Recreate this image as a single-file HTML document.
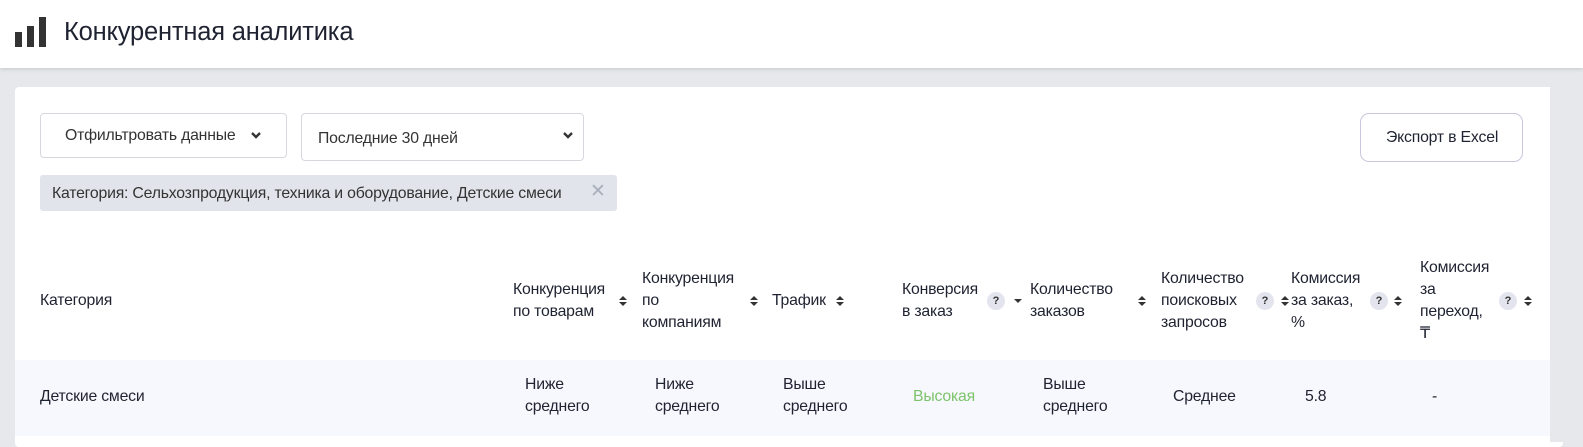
<!DOCTYPE html>
<html><head><meta charset="utf-8"><style>
*{margin:0;padding:0;box-sizing:border-box}
body{width:1583px;height:442px;overflow:hidden;background:#e7e8ec;font-family:"Liberation Sans",sans-serif;color:#1f2230;font-size:16px;position:relative}
.a{position:absolute;white-space:nowrap}
.hdr{left:0;top:0;width:1583px;height:68px;background:#fff;box-shadow:0 1px 4px rgba(0,0,0,.15)}
.bar{background:#333;width:7px}
.card{left:15px;top:87px;width:1548px;height:360px;background:#fff;border-radius:4px}
.btn{border:1px solid #d6d8de;border-radius:4px;background:#fff}
.t{font-size:15.8px;line-height:22px;letter-spacing:-0.2px}
.q{width:18px;height:18px;border-radius:50%;background:#e3e4ee;font-size:11px;font-weight:bold;text-align:center;line-height:18px;color:#333}
.s{width:8px;height:12px}
.chev{width:10px;height:10px}
</style></head><body>
<div class="a hdr"></div>
<div class="a bar" style="left:15px;top:32px;height:15px"></div>
<div class="a bar" style="left:27px;top:26px;height:21px"></div>
<div class="a bar" style="left:39px;top:17px;height:30px"></div>
<div class="a" style="left:64px;top:16px;font-size:25.5px;line-height:32px;color:#1f2230;letter-spacing:-0.2px">Конкурентная аналитика</div>
<div class="a card"></div>

<div class="a btn" style="left:40px;top:113px;width:247px;height:45px"></div>
<div class="a t" style="left:65px;top:125px;color:#333">Отфильтровать данные</div>
<svg class="a chev" style="left:251px;top:130px" viewBox="0 0 10 10"><path d="M1 3l4 4 4-4" stroke="#333" stroke-width="2.4" fill="none"/></svg>
<div class="a btn" style="left:301px;top:113px;width:283px;height:48px"></div>
<div class="a t" style="left:318px;top:128px;color:#333">Последние 30 дней</div>
<svg class="a chev" style="left:563px;top:130px" viewBox="0 0 10 10"><path d="M1 3l4 4 4-4" stroke="#333" stroke-width="2.4" fill="none"/></svg>

<div class="a btn" style="left:1360px;top:113px;width:163px;height:49px;border-color:#c9c6de;border-radius:9px"></div>
<div class="a t" style="left:1386px;top:127px;color:#1f2230">Экспорт в Excel</div>

<div class="a" style="left:40px;top:175px;width:577px;height:36px;background:#e1e4ea;border-radius:3px"></div>
<div class="a t" style="left:52px;top:183px;color:#333">Категория: Сельхозпродукция, техника и оборудование, Детские смеси</div>
<div class="a" style="left:590px;top:181px;font-size:19px;color:#aab0bb;line-height:22px">✕</div>

<div class="a t" style="left:40px;top:290px">Категория</div>
<div class="a t" style="left:513px;top:279px">Конкуренция<br>по товарам</div>
<div class="a t" style="left:642px;top:268px">Конкуренция<br>по<br>компаниям</div>
<div class="a t" style="left:772px;top:290px">Трафик</div>
<div class="a t" style="left:902px;top:279px">Конверсия<br>в заказ</div>
<div class="a t" style="left:1030px;top:279px">Количество<br>заказов</div>
<div class="a t" style="left:1161px;top:268px">Количество<br>поисковых<br>запросов</div>
<div class="a t" style="left:1291px;top:268px">Комиссия<br>за заказ,<br>%</div>
<div class="a t" style="left:1420px;top:257px">Комиссия<br>за<br>переход,<br>₸</div>

<svg class="a s" style="left:619px;top:295px" viewBox="0 0 8 12"><path d="M0 5h8L4 1zM0 7h8L4 11z" fill="#333"/></svg>
<svg class="a s" style="left:750px;top:295px" viewBox="0 0 8 12"><path d="M0 5h8L4 1zM0 7h8L4 11z" fill="#333"/></svg>
<svg class="a s" style="left:836px;top:295px" viewBox="0 0 8 12"><path d="M0 5h8L4 1zM0 7h8L4 11z" fill="#333"/></svg>
<div class="a q" style="left:987px;top:292px">?</div>
<svg class="a s" style="left:1014px;top:295px" viewBox="0 0 8 12"><path d="M0 4h8L4 8z" fill="#333"/></svg>
<svg class="a s" style="left:1138px;top:295px" viewBox="0 0 8 12"><path d="M0 5h8L4 1zM0 7h8L4 11z" fill="#333"/></svg>
<div class="a q" style="left:1256px;top:292px">?</div>
<svg class="a s" style="left:1281px;top:295px" viewBox="0 0 8 12"><path d="M0 5h8L4 1zM0 7h8L4 11z" fill="#333"/></svg>
<div class="a q" style="left:1370px;top:292px">?</div>
<svg class="a s" style="left:1394px;top:295px" viewBox="0 0 8 12"><path d="M0 5h8L4 1zM0 7h8L4 11z" fill="#333"/></svg>
<div class="a q" style="left:1499px;top:292px">?</div>
<svg class="a s" style="left:1524px;top:295px" viewBox="0 0 8 12"><path d="M0 5h8L4 1zM0 7h8L4 11z" fill="#333"/></svg>

<div class="a" style="left:15px;top:360px;width:1535px;height:76px;background:#f7f8fd"></div>
<div class="a t" style="left:40px;top:386px">Детские смеси</div>
<div class="a t" style="left:525px;top:374px">Ниже<br>среднего</div>
<div class="a t" style="left:655px;top:374px">Ниже<br>среднего</div>
<div class="a t" style="left:783px;top:374px">Выше<br>среднего</div>
<div class="a t" style="left:913px;top:386px;color:#7cc36b">Высокая</div>
<div class="a t" style="left:1043px;top:374px">Выше<br>среднего</div>
<div class="a t" style="left:1173px;top:386px">Среднее</div>
<div class="a t" style="left:1305px;top:386px">5.8</div>
<div class="a t" style="left:1432px;top:386px">-</div>
<div class="a" style="left:1550px;top:87px;width:33px;height:355px;background:#e7e8ec"></div>
</body></html>
